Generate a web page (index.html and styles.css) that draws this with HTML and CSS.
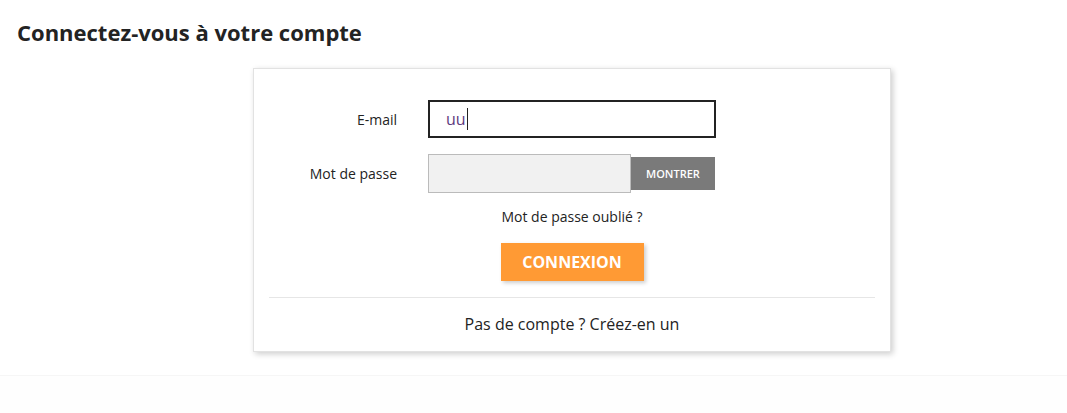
FILE: index.html
```html
<!DOCTYPE html>
<html lang="fr">
<head>
<meta charset="utf-8">
<title>Connexion</title>
<link rel="stylesheet" href="styles.css">
</head>
<body>
<main class="page">
  <h1 class="page-title">Connectez-vous à votre compte</h1>
  <section class="login-card">
    <form class="login-form">
      <div class="form-row">
        <label class="form-label" for="email">E-mail</label>
        <div class="email-field"><span class="typed">uu</span><span class="caret"></span></div>
      </div>
      <div class="form-row">
        <label class="form-label" for="pwd">Mot de passe</label>
        <div class="pwd-group">
          <div class="pwd-field"></div>
          <button type="button" class="show-btn">MONTRER</button>
        </div>
      </div>
      <div class="forgot"><a href="#">Mot de passe oublié ?</a></div>
      <div class="submit-wrap"><button type="button" class="submit-btn">CONNEXION</button></div>
    </form>
    <hr class="sep">
    <div class="no-account"><a href="#">Pas de compte ? Créez-en un</a></div>
  </section>
</main>
<footer class="footer"></footer>
</body>
</html>
```
FILE: styles.css
```css
html, body {
  margin: 0;
  padding: 0;
  background: #fff;
  font-family: "Open Sans", "Noto Sans", sans-serif;
  color: #232323;
}
.page {
  padding: 17px 0 0 17px;
  height: 375px;
  box-sizing: border-box;
}
.page-title {
  margin: 0;
  font-size: 22px;
  font-weight: 700;
  line-height: 30px;
  color: #232323;
}
.login-card {
  margin: 21px 0 0 236px;
  width: 638px;
  box-sizing: border-box;
  border: 1px solid #e2e2e2;
  background: #fff;
  box-shadow: 2px 2px 6px 0 rgba(0, 0, 0, 0.2);
  padding: 31px 15px 16px 15px;
}
.login-form {
  display: flex;
  flex-direction: column;
}
.form-row {
  display: flex;
  align-items: center;
  height: 38px;
  margin-bottom: 16px;
}
.form-label {
  width: 128px;
  text-align: right;
  font-size: 14px;
  margin-right: 31px;
  color: #232323;
}
.email-field {
  width: 288px;
  height: 38px;
  box-sizing: border-box;
  border: 2px solid #232323;
  padding-left: 16px;
  display: flex;
  align-items: center;
  font-size: 16px;
  color: #5e3a7e;
}
.caret {
  display: inline-block;
  width: 1px;
  height: 22px;
  background: #232323;
  margin-left: 1px;
}
.pwd-group {
  display: flex;
  align-items: center;
}
.pwd-field {
  width: 203px;
  height: 39px;
  box-sizing: border-box;
  border: 1px solid #bbb;
  background: #f1f1f1;
}
.show-btn {
  width: 84px;
  height: 33px;
  border: 0;
  background: #7a7a7a;
  color: #fff;
  font-family: inherit;
  font-size: 11px;
  font-weight: 600;
  padding: 0;
}
.forgot {
  text-align: center;
  font-size: 14px;
  line-height: 20px;
  margin-top: -1px;
}
.forgot a, .no-account a {
  color: #232323;
  text-decoration: none;
}
.submit-wrap {
  text-align: center;
  margin-top: 16px;
}
.submit-btn {
  width: 143px;
  height: 38px;
  border: 0;
  background: #ff9a34;
  color: #fff;
  font-family: inherit;
  font-size: 16px;
  font-weight: 700;
  box-shadow: 2px 2px 4px 0 rgba(0, 0, 0, 0.2);
  padding: 0;
}
.sep {
  margin: 16px 0 0 0;
  border: 0;
  border-top: 1px solid #e6e6e6;
}
.no-account {
  text-align: center;
  font-size: 16px;
  line-height: 22px;
  margin-top: 15px;
}
.footer {
  border-top: 1px solid #f6f6f6;
  background: #fefefe;
  height: 37px;
}
```
